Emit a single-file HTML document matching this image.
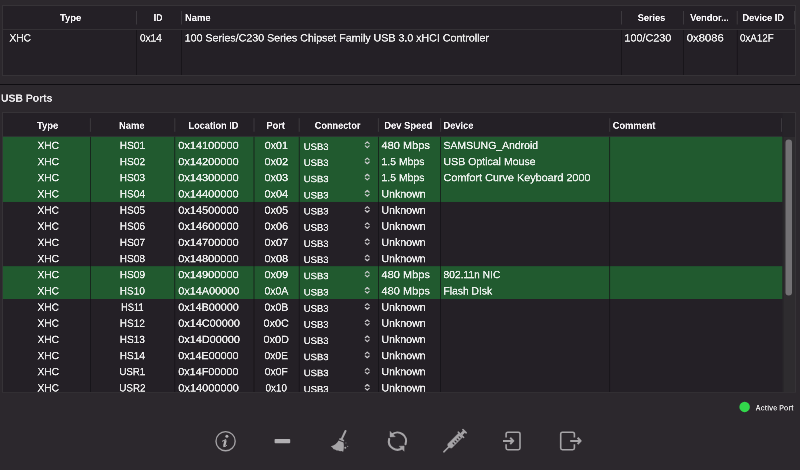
<!DOCTYPE html>
<html><head><meta charset="utf-8"><title>USB Ports</title>
<style>
html,body{margin:0;padding:0;}
html{background:#2c282d;}
body{width:800px;height:470px;overflow:hidden;background:#2c282d;position:relative;
 font-family:"Liberation Sans",sans-serif;font-size:21px;color:#dedcdf;}
.abs{position:absolute;}
.tx{position:absolute;left:0;width:3200px;overflow:hidden;transform:scale(0.25);transform-origin:0 0;will-change:transform;}
.t{position:absolute;white-space:nowrap;line-height:48px;height:48px;color:rgba(255,255,255,0.85);-webkit-text-stroke:1.4px rgba(255,255,255,0.85);transform-origin:0 0;}
.h{font-weight:bold;color:#f4f2f5;-webkit-text-stroke:0.5px #f4f2f5;}
</style></head><body>

<svg class="abs" style="left:0;top:0;" width="800" height="470" viewBox="0 0 800 470">
<rect x="2" y="5" width="794" height="71" fill="#363337"/>
<rect x="3" y="6" width="792" height="69" fill="#242026"/>
<rect x="3" y="29" width="792" height="1" fill="#343135"/>
<rect x="136" y="11" width="1" height="13.5" fill="#3c393e"/>
<rect x="136.15" y="30" width="0.7" height="45" fill="#141216"/>
<rect x="181" y="11" width="1" height="13.5" fill="#3c393e"/>
<rect x="181.15" y="30" width="0.7" height="45" fill="#141216"/>
<rect x="621" y="11" width="1" height="13.5" fill="#3c393e"/>
<rect x="621.15" y="30" width="0.7" height="45" fill="#141216"/>
<rect x="683" y="11" width="1" height="13.5" fill="#3c393e"/>
<rect x="683.15" y="30" width="0.7" height="45" fill="#141216"/>
<rect x="736.75" y="11" width="1" height="13.5" fill="#3c393e"/>
<rect x="736.9" y="30" width="0.7" height="45" fill="#141216"/>
<rect x="794" y="11" width="1" height="13.5" fill="#3c393e"/>
<rect x="0" y="84" width="800" height="1" fill="#0f0d11"/>
<rect x="2" y="112" width="794" height="280.7" fill="#363337"/>
<rect x="3" y="113" width="792" height="279" fill="#242026"/>
<rect x="3" y="135.9" width="779.3" height="0.9" fill="#332d37"/>
<rect x="782.3" y="113" width="12.7" height="24" fill="#262328"/>
<rect x="782.3" y="137" width="12.7" height="255" fill="#2e2c2f"/>
<rect x="782.3" y="137" width="1.2" height="255" fill="#252327"/>
<rect x="785.5" y="139.5" width="6.5" height="156" rx="3.25" fill="#737174"/>
<rect x="2.85" y="136.8" width="779.45" height="65.18" fill="#215a2f"/>
<rect x="2.85" y="266.16" width="779.45" height="32.84" fill="#215a2f"/>
<rect x="89.9" y="118.2" width="1" height="13.6" fill="#3c393e"/>
<rect x="90.05" y="136.8" width="0.7" height="255.2" fill="#141216"/>
<rect x="174.3" y="118.2" width="1" height="13.6" fill="#3c393e"/>
<rect x="174.45" y="136.8" width="0.7" height="255.2" fill="#141216"/>
<rect x="253.5" y="118.2" width="1" height="13.6" fill="#3c393e"/>
<rect x="253.65" y="136.8" width="0.7" height="255.2" fill="#141216"/>
<rect x="298.7" y="118.2" width="1" height="13.6" fill="#3c393e"/>
<rect x="298.85" y="136.8" width="0.7" height="255.2" fill="#141216"/>
<rect x="377.9" y="118.2" width="1" height="13.6" fill="#3c393e"/>
<rect x="378.05" y="136.8" width="0.7" height="255.2" fill="#141216"/>
<rect x="440.1" y="118.2" width="1" height="13.6" fill="#3c393e"/>
<rect x="440.25" y="136.8" width="0.7" height="255.2" fill="#141216"/>
<rect x="609.2" y="118.2" width="1" height="13.6" fill="#3c393e"/>
<rect x="609.35" y="136.8" width="0.7" height="255.2" fill="#141216"/>
<rect x="781" y="118.2" width="1" height="13.6" fill="#3c393e"/>
<path d="M365.35 143.70 l1.9 -1.75 l1.9 1.75 M365.35 145.80 l1.9 1.75 l1.9 -1.75 M365.35 159.87 l1.9 -1.75 l1.9 1.75 M365.35 161.97 l1.9 1.75 l1.9 -1.75 M365.35 176.04 l1.9 -1.75 l1.9 1.75 M365.35 178.14 l1.9 1.75 l1.9 -1.75 M365.35 192.21 l1.9 -1.75 l1.9 1.75 M365.35 194.31 l1.9 1.75 l1.9 -1.75 M365.35 208.38 l1.9 -1.75 l1.9 1.75 M365.35 210.48 l1.9 1.75 l1.9 -1.75 M365.35 224.55 l1.9 -1.75 l1.9 1.75 M365.35 226.65 l1.9 1.75 l1.9 -1.75 M365.35 240.72 l1.9 -1.75 l1.9 1.75 M365.35 242.82 l1.9 1.75 l1.9 -1.75 M365.35 256.89 l1.9 -1.75 l1.9 1.75 M365.35 258.99 l1.9 1.75 l1.9 -1.75 M365.35 273.06 l1.9 -1.75 l1.9 1.75 M365.35 275.16 l1.9 1.75 l1.9 -1.75 M365.35 289.23 l1.9 -1.75 l1.9 1.75 M365.35 291.33 l1.9 1.75 l1.9 -1.75 M365.35 305.40 l1.9 -1.75 l1.9 1.75 M365.35 307.50 l1.9 1.75 l1.9 -1.75 M365.35 321.57 l1.9 -1.75 l1.9 1.75 M365.35 323.67 l1.9 1.75 l1.9 -1.75 M365.35 337.74 l1.9 -1.75 l1.9 1.75 M365.35 339.84 l1.9 1.75 l1.9 -1.75 M365.35 353.91 l1.9 -1.75 l1.9 1.75 M365.35 356.01 l1.9 1.75 l1.9 -1.75 M365.35 370.08 l1.9 -1.75 l1.9 1.75 M365.35 372.18 l1.9 1.75 l1.9 -1.75 M365.35 386.25 l1.9 -1.75 l1.9 1.75 M365.35 388.35 l1.9 1.75 l1.9 -1.75" fill="none" stroke="#d0ced1" stroke-width="1.15" stroke-linecap="round" stroke-linejoin="round"/>
<circle cx="744.65" cy="406.9" r="5.25" fill="#32d74b"/>
<circle cx="225.6" cy="441.15" r="9.6" fill="none" stroke="#a6a4a7" stroke-width="1.35"/>
<g fill="none" stroke="#b4b2b5" stroke-linecap="round">
<circle cx="226.9" cy="436.2" r="1.5" fill="#b4b2b5" stroke="none"/>
<path d="M225.6 440.3 L224.2 446" stroke-width="2.3" stroke-linecap="butt"/>
<path d="M222.4 441.2 L225.8 439.6" stroke-width="1"/>
<path d="M223.6 446.7 Q225.6 447.2 226.7 445.4" stroke-width="1"/>
</g>
<rect x="274.6" y="439" width="15.6" height="4.2" rx="0.8" fill="#b1afb2"/>
<!-- broom -->
<g fill="#a6a4a7">
<path d="M345.5 431 L341.7 439.2" stroke="#a6a4a7" stroke-width="2" stroke-linecap="round" fill="none"/>
<path d="M339.7 437.9 L344.3 440 L343.7 441.5 L339 439.4 Z"/>
<path d="M338.6 440.4 L343.5 442.6 C344.1 445.6 343.9 448.8 343.2 451.7 L341.3 451 L340 451.3 L338.2 450.5 L336.6 450.4 L335 449.5 L333.6 449.2 L332.6 447.8 L330.8 446.3 C334.3 445.4 337 443.4 338.6 440.4 Z"/>
<circle cx="345.9" cy="443" r="0.65" opacity="0.55"/><circle cx="347.7" cy="446.3" r="0.6" opacity="0.9"/><circle cx="345.3" cy="447.8" r="1"/>
</g>
<!-- refresh -->
<g fill="none" stroke="#a6a4a7" stroke-width="2.15" stroke-linecap="round">
<path d="M405.53 444.18 A8.6 8.6 0 0 0 391.97 434.51"/>
<path d="M389.17 438.95 A8.6 8.6 0 0 0 403.03 447.69"/>
</g>
<path d="M390 431.3 L390 436.9 L395.3 436.7 Z" fill="#a6a4a7" stroke="#a6a4a7" stroke-width="0.4" stroke-linejoin="round"/>
<path d="M404.1 451.3 L404.1 445.9 L399.1 446.2 Z" fill="#a6a4a7" stroke="#a6a4a7" stroke-width="0.4" stroke-linejoin="round"/>
<!-- syringe -->
<g transform="translate(443.4 452.3) rotate(-45)" fill="#a6a4a7">
<rect x="0" y="-0.8" width="8.5" height="1.6" rx="0.6"/>
<path d="M7.6 -1.3 L9 -2.8 L24.3 -2.8 L24.3 2.8 L9 2.8 L7.6 1.3 Z" stroke="#a6a4a7" stroke-width="0.5" stroke-linejoin="round"/>
<rect x="24" y="-4.5" width="1.6" height="9" rx="0.6"/>
<rect x="25.4" y="-1.4" width="3.9" height="2.8"/>
<rect x="29" y="-3" width="1.7" height="6" rx="0.6"/>
<g fill="#2c282d"><rect x="12.7" y="-0.3" width="1.2" height="2.5" rx="0.5"/><rect x="15.6" y="-0.3" width="1.2" height="2.5" rx="0.5"/><rect x="18.5" y="-0.3" width="1.2" height="2.5" rx="0.5"/><rect x="21.4" y="-0.3" width="1.2" height="2.5" rx="0.5"/></g>
</g>
<!-- import -->
<g fill="none" stroke="#a6a4a7" stroke-linejoin="round">
<path d="M506.1 437.4 V434 a1.7 1.7 0 0 1 1.7 -1.7 H518.3 a1.7 1.7 0 0 1 1.7 1.7 V448 a1.7 1.7 0 0 1 -1.7 1.7 H507.8 a1.7 1.7 0 0 1 -1.7 -1.7 V444.3" stroke-width="1.6"/>
<path d="M503 440.9 H512.6 M510.2 437.8 L513.3 440.9 L510.2 444" stroke-width="1.95"/>
</g>
<!-- export -->
<g fill="none" stroke="#a6a4a7" stroke-linejoin="round">
<path d="M574.4 437.4 V434 a1.7 1.7 0 0 0 -1.7 -1.7 H562.4 a1.7 1.7 0 0 0 -1.7 1.7 V448 a1.7 1.7 0 0 0 1.7 1.7 H572.7 a1.7 1.7 0 0 0 1.7 -1.7 V444.3" stroke-width="1.6"/>
<path d="M570.2 440.9 H580 M577.6 437.8 L580.7 440.9 L577.6 444" stroke-width="1.95"/>
</g>

</svg>
<div class="tx" style="top:0px;height:1880px;">
<div class="t h" style="left:240.4px;top:46.7px;font-size:38.4px;transform:scaleX(0.9772);">Type</div>
<div class="t h" style="left:615.2px;top:46.7px;font-size:38.4px;transform:scaleX(0.9062);">ID</div>
<div class="t h" style="left:740.0px;top:46.7px;font-size:38.4px;transform:scaleX(0.9791);">Name</div>
<div class="t h" style="left:2551.0px;top:46.7px;font-size:38.4px;transform:scaleX(0.9541);">Series</div>
<div class="t h" style="left:2760.8px;top:46.7px;font-size:38.4px;transform:scaleX(0.9647);">Vendor...</div>
<div class="t h" style="left:2969.8px;top:46.7px;font-size:38.4px;transform:scaleX(0.9601);">Device ID</div>
<div class="t" style="left:37.6px;top:127.6px;font-size:41.6px;transform:scaleX(0.9791);">XHC</div>
<div class="t" style="left:560.0px;top:127.6px;font-size:41.6px;transform:scaleX(0.9644);">0x14</div>
<div class="t" style="left:739.2px;top:127.6px;font-size:41.6px;transform:scaleX(1.0242);">100 Series/C230 Series Chipset Family USB 3.0 xHCI Controller</div>
<div class="t" style="left:2498.0px;top:127.6px;font-size:41.6px;transform:scaleX(1.0365);">100/C230</div>
<div class="t" style="left:2747.0px;top:127.6px;font-size:41.6px;transform:scaleX(1.0844);">0x8086</div>
<div class="t" style="left:2960.0px;top:127.6px;font-size:41.6px;transform:scaleX(0.9416);">0xA12F</div>
<div class="t h" style="left:4.0px;top:369.4px;font-size:42.0px;transform:scaleX(0.9898);color:#e6e4e7;-webkit-text-stroke:0.5px #e6e4e7;">USB Ports</div>
<div class="t h" style="left:147.6px;top:477.5px;font-size:38.4px;transform:scaleX(0.9772);">Type</div>
<div class="t h" style="left:476.4px;top:477.5px;font-size:38.4px;transform:scaleX(0.9791);">Name</div>
<div class="t h" style="left:753.8px;top:477.5px;font-size:38.4px;transform:scaleX(0.9547);">Location ID</div>
<div class="t h" style="left:1066.0px;top:477.5px;font-size:38.4px;transform:scaleX(0.9531);">Port</div>
<div class="t h" style="left:1259.4px;top:477.5px;font-size:38.4px;transform:scaleX(0.9521);">Connector</div>
<div class="t h" style="left:1537.2px;top:477.5px;font-size:38.4px;transform:scaleX(0.9778);">Dev Speed</div>
<div class="t h" style="left:1774.4px;top:477.5px;font-size:38.4px;transform:scaleX(0.9659);">Device</div>
<div class="t h" style="left:2451.2px;top:477.5px;font-size:38.4px;transform:scaleX(0.9645);">Comment</div>
<div class="t h" style="left:3022.0px;top:1606.9px;font-size:32.0px;transform:scaleX(0.8997);color:rgba(255,255,255,0.82);-webkit-text-stroke:0;">Active Port</div>
</div>
<div class="tx" style="top:136px;height:1024px;">
<div class="t" style="left:150.2px;top:13.9px;font-size:41.6px;transform:scaleX(0.9791);">XHC</div>
<div class="t" style="left:479.0px;top:13.9px;font-size:41.6px;transform:scaleX(0.9725);">HS01</div>
<div class="t" style="left:712.8px;top:13.9px;font-size:41.6px;transform:scaleX(1.0549);">0x14100000</div>
<div class="t" style="left:1059.0px;top:13.9px;font-size:41.6px;transform:scaleX(1.0243);">0x01</div>
<div class="t" style="left:1215.2px;top:19.7px;font-size:36.4px;transform:scaleX(1.0432);">USB3</div>
<div class="t" style="left:1526.4px;top:13.9px;font-size:41.6px;transform:scaleX(1.0597);">480 Mbps</div>
<div class="t" style="left:1774.4px;top:13.9px;font-size:41.6px;transform:scaleX(1.0041);">SAMSUNG_Android</div>
<div class="t" style="left:150.2px;top:78.5px;font-size:41.6px;transform:scaleX(0.9791);">XHC</div>
<div class="t" style="left:479.0px;top:78.5px;font-size:41.6px;transform:scaleX(0.9725);">HS02</div>
<div class="t" style="left:712.8px;top:78.5px;font-size:41.6px;transform:scaleX(1.0549);">0x14200000</div>
<div class="t" style="left:1058.0px;top:78.5px;font-size:41.6px;transform:scaleX(1.0464);">0x02</div>
<div class="t" style="left:1215.2px;top:84.3px;font-size:36.4px;transform:scaleX(1.0432);">USB3</div>
<div class="t" style="left:1526.4px;top:78.5px;font-size:41.6px;transform:scaleX(1.0028);">1.5 Mbps</div>
<div class="t" style="left:1774.4px;top:78.5px;font-size:41.6px;transform:scaleX(1.0149);">USB Optical Mouse</div>
<div class="t" style="left:150.2px;top:143.2px;font-size:41.6px;transform:scaleX(0.9791);">XHC</div>
<div class="t" style="left:479.0px;top:143.2px;font-size:41.6px;transform:scaleX(0.9725);">HS03</div>
<div class="t" style="left:712.8px;top:143.2px;font-size:41.6px;transform:scaleX(1.0549);">0x14300000</div>
<div class="t" style="left:1058.0px;top:143.2px;font-size:41.6px;transform:scaleX(1.0464);">0x03</div>
<div class="t" style="left:1215.2px;top:149.0px;font-size:36.4px;transform:scaleX(1.0432);">USB3</div>
<div class="t" style="left:1526.4px;top:143.2px;font-size:41.6px;transform:scaleX(1.0028);">1.5 Mbps</div>
<div class="t" style="left:1774.4px;top:143.2px;font-size:41.6px;transform:scaleX(1.0422);">Comfort Curve Keyboard 2000</div>
<div class="t" style="left:150.2px;top:207.9px;font-size:41.6px;transform:scaleX(0.9791);">XHC</div>
<div class="t" style="left:479.0px;top:207.9px;font-size:41.6px;transform:scaleX(0.9725);">HS04</div>
<div class="t" style="left:712.8px;top:207.9px;font-size:41.6px;transform:scaleX(1.0549);">0x14400000</div>
<div class="t" style="left:1058.0px;top:207.9px;font-size:41.6px;transform:scaleX(1.0464);">0x04</div>
<div class="t" style="left:1215.2px;top:213.7px;font-size:36.4px;transform:scaleX(1.0432);">USB3</div>
<div class="t" style="left:1526.4px;top:207.9px;font-size:41.6px;transform:scaleX(1.0171);">Unknown</div>
<div class="t" style="left:150.2px;top:272.6px;font-size:41.6px;transform:scaleX(0.9791);">XHC</div>
<div class="t" style="left:479.0px;top:272.6px;font-size:41.6px;transform:scaleX(0.9725);">HS05</div>
<div class="t" style="left:712.8px;top:272.6px;font-size:41.6px;transform:scaleX(1.0549);">0x14500000</div>
<div class="t" style="left:1058.0px;top:272.6px;font-size:41.6px;transform:scaleX(1.0464);">0x05</div>
<div class="t" style="left:1215.2px;top:278.4px;font-size:36.4px;transform:scaleX(1.0432);">USB3</div>
<div class="t" style="left:1526.4px;top:272.6px;font-size:41.6px;transform:scaleX(1.0171);">Unknown</div>
<div class="t" style="left:150.2px;top:337.3px;font-size:41.6px;transform:scaleX(0.9791);">XHC</div>
<div class="t" style="left:479.0px;top:337.3px;font-size:41.6px;transform:scaleX(0.9725);">HS06</div>
<div class="t" style="left:712.8px;top:337.3px;font-size:41.6px;transform:scaleX(1.0549);">0x14600000</div>
<div class="t" style="left:1058.0px;top:337.3px;font-size:41.6px;transform:scaleX(1.0464);">0x06</div>
<div class="t" style="left:1215.2px;top:343.1px;font-size:36.4px;transform:scaleX(1.0432);">USB3</div>
<div class="t" style="left:1526.4px;top:337.3px;font-size:41.6px;transform:scaleX(1.0171);">Unknown</div>
<div class="t" style="left:150.2px;top:401.9px;font-size:41.6px;transform:scaleX(0.9791);">XHC</div>
<div class="t" style="left:479.0px;top:401.9px;font-size:41.6px;transform:scaleX(0.9725);">HS07</div>
<div class="t" style="left:712.8px;top:401.9px;font-size:41.6px;transform:scaleX(1.0549);">0x14700000</div>
<div class="t" style="left:1058.0px;top:401.9px;font-size:41.6px;transform:scaleX(1.0464);">0x07</div>
<div class="t" style="left:1215.2px;top:407.7px;font-size:36.4px;transform:scaleX(1.0432);">USB3</div>
<div class="t" style="left:1526.4px;top:401.9px;font-size:41.6px;transform:scaleX(1.0171);">Unknown</div>
<div class="t" style="left:150.2px;top:466.6px;font-size:41.6px;transform:scaleX(0.9791);">XHC</div>
<div class="t" style="left:479.0px;top:466.6px;font-size:41.6px;transform:scaleX(0.9725);">HS08</div>
<div class="t" style="left:712.8px;top:466.6px;font-size:41.6px;transform:scaleX(1.0549);">0x14800000</div>
<div class="t" style="left:1058.0px;top:466.6px;font-size:41.6px;transform:scaleX(1.0464);">0x08</div>
<div class="t" style="left:1215.2px;top:472.4px;font-size:36.4px;transform:scaleX(1.0432);">USB3</div>
<div class="t" style="left:1526.4px;top:466.6px;font-size:41.6px;transform:scaleX(1.0171);">Unknown</div>
<div class="t" style="left:150.2px;top:531.3px;font-size:41.6px;transform:scaleX(0.9791);">XHC</div>
<div class="t" style="left:479.0px;top:531.3px;font-size:41.6px;transform:scaleX(0.9725);">HS09</div>
<div class="t" style="left:712.8px;top:531.3px;font-size:41.6px;transform:scaleX(1.0549);">0x14900000</div>
<div class="t" style="left:1058.0px;top:531.3px;font-size:41.6px;transform:scaleX(1.0464);">0x09</div>
<div class="t" style="left:1215.2px;top:537.1px;font-size:36.4px;transform:scaleX(1.0432);">USB3</div>
<div class="t" style="left:1526.4px;top:531.3px;font-size:41.6px;transform:scaleX(1.0597);">480 Mbps</div>
<div class="t" style="left:1774.4px;top:531.3px;font-size:41.6px;transform:scaleX(0.9875);">802.11n NIC</div>
<div class="t" style="left:150.2px;top:596.0px;font-size:41.6px;transform:scaleX(0.9791);">XHC</div>
<div class="t" style="left:479.2px;top:596.0px;font-size:41.6px;transform:scaleX(0.9686);">HS10</div>
<div class="t" style="left:712.8px;top:596.0px;font-size:41.6px;transform:scaleX(1.0443);">0x14A00000</div>
<div class="t" style="left:1057.6px;top:596.0px;font-size:41.6px;transform:scaleX(1.0040);">0x0A</div>
<div class="t" style="left:1215.2px;top:601.8px;font-size:36.4px;transform:scaleX(1.0432);">USB3</div>
<div class="t" style="left:1526.4px;top:596.0px;font-size:41.6px;transform:scaleX(1.0597);">480 Mbps</div>
<div class="t" style="left:1774.4px;top:596.0px;font-size:41.6px;transform:scaleX(0.9894);">Flash DIsk</div>
<div class="t" style="left:150.2px;top:660.7px;font-size:41.6px;transform:scaleX(0.9791);">XHC</div>
<div class="t" style="left:484.4px;top:660.7px;font-size:41.6px;transform:scaleX(0.8952);">HS11</div>
<div class="t" style="left:712.8px;top:660.7px;font-size:41.6px;transform:scaleX(1.0375);">0x14B00000</div>
<div class="t" style="left:1057.6px;top:660.7px;font-size:41.6px;transform:scaleX(1.0040);">0x0B</div>
<div class="t" style="left:1215.2px;top:666.5px;font-size:36.4px;transform:scaleX(1.0432);">USB3</div>
<div class="t" style="left:1526.4px;top:660.7px;font-size:41.6px;transform:scaleX(1.0171);">Unknown</div>
<div class="t" style="left:150.2px;top:725.3px;font-size:41.6px;transform:scaleX(0.9791);">XHC</div>
<div class="t" style="left:479.2px;top:725.3px;font-size:41.6px;transform:scaleX(0.9686);">HS12</div>
<div class="t" style="left:712.8px;top:725.3px;font-size:41.6px;transform:scaleX(1.0460);">0x14C00000</div>
<div class="t" style="left:1054.4px;top:725.3px;font-size:41.6px;transform:scaleX(1.0462);">0x0C</div>
<div class="t" style="left:1215.2px;top:731.1px;font-size:36.4px;transform:scaleX(1.0432);">USB3</div>
<div class="t" style="left:1526.4px;top:725.3px;font-size:41.6px;transform:scaleX(1.0171);">Unknown</div>
<div class="t" style="left:150.2px;top:790.0px;font-size:41.6px;transform:scaleX(0.9791);">XHC</div>
<div class="t" style="left:479.2px;top:790.0px;font-size:41.6px;transform:scaleX(0.9686);">HS13</div>
<div class="t" style="left:712.8px;top:790.0px;font-size:41.6px;transform:scaleX(1.0460);">0x14D00000</div>
<div class="t" style="left:1054.4px;top:790.0px;font-size:41.6px;transform:scaleX(1.0462);">0x0D</div>
<div class="t" style="left:1215.2px;top:795.8px;font-size:36.4px;transform:scaleX(1.0432);">USB3</div>
<div class="t" style="left:1526.4px;top:790.0px;font-size:41.6px;transform:scaleX(1.0171);">Unknown</div>
<div class="t" style="left:150.2px;top:854.7px;font-size:41.6px;transform:scaleX(0.9791);">XHC</div>
<div class="t" style="left:479.2px;top:854.7px;font-size:41.6px;transform:scaleX(0.9686);">HS14</div>
<div class="t" style="left:712.8px;top:854.7px;font-size:41.6px;transform:scaleX(1.0323);">0x14E00000</div>
<div class="t" style="left:1058.4px;top:854.7px;font-size:41.6px;transform:scaleX(0.9871);">0x0E</div>
<div class="t" style="left:1215.2px;top:860.5px;font-size:36.4px;transform:scaleX(1.0432);">USB3</div>
<div class="t" style="left:1526.4px;top:854.7px;font-size:41.6px;transform:scaleX(1.0171);">Unknown</div>
<div class="t" style="left:150.2px;top:919.4px;font-size:41.6px;transform:scaleX(0.9791);">XHC</div>
<div class="t" style="left:478.4px;top:919.4px;font-size:41.6px;transform:scaleX(0.9228);">USR1</div>
<div class="t" style="left:712.8px;top:919.4px;font-size:41.6px;transform:scaleX(1.0410);">0x14F00000</div>
<div class="t" style="left:1059.2px;top:919.4px;font-size:41.6px;transform:scaleX(0.9948);">0x0F</div>
<div class="t" style="left:1215.2px;top:925.2px;font-size:36.4px;transform:scaleX(1.0432);">USB3</div>
<div class="t" style="left:1526.4px;top:919.4px;font-size:41.6px;transform:scaleX(1.0171);">Unknown</div>
<div class="t" style="left:150.2px;top:984.1px;font-size:41.6px;transform:scaleX(0.9791);">XHC</div>
<div class="t" style="left:477.0px;top:984.1px;font-size:41.6px;transform:scaleX(0.9480);">USR2</div>
<div class="t" style="left:712.8px;top:984.1px;font-size:41.6px;transform:scaleX(1.0584);">0x14000000</div>
<div class="t" style="left:1062.4px;top:984.1px;font-size:41.6px;transform:scaleX(0.9489);">0x10</div>
<div class="t" style="left:1215.2px;top:989.9px;font-size:36.4px;transform:scaleX(1.0432);">USB3</div>
<div class="t" style="left:1526.4px;top:984.1px;font-size:41.6px;transform:scaleX(1.0171);">Unknown</div>
</div>
</body></html>
